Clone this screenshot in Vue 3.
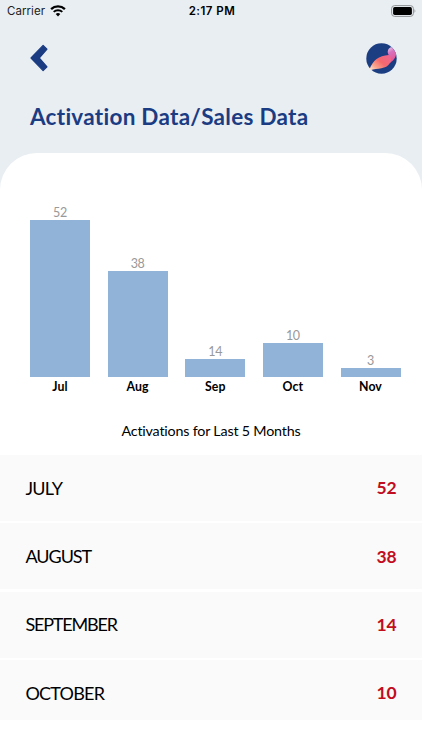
<template>
	<div class="screen">
		<div class="status-bar">
			<div class="carrier">
				<span>Carrier</span>
				<svg width="16" height="12" viewBox="0 0 16 12" aria-hidden="true">
					<path d="M1.1 4.2 A10 10 0 0 1 14.9 4.2" fill="none" stroke="#000" stroke-width="2.3" />
					<path d="M3.7 6.9 A6.2 6.2 0 0 1 12.3 6.9" fill="none" stroke="#000" stroke-width="2" />
					<path d="M5.7 9 A3.3 3.3 0 0 1 10.3 9 L8 11.4 Z" fill="#000" />
				</svg>
			</div>
			<span class="time">2:17 PM</span>
			<svg class="battery" width="26" height="12" viewBox="0 0 26 12" aria-hidden="true">
				<rect x="0.6" y="0.6" width="21.8" height="10.8" rx="3" fill="none" stroke="#8f9294" stroke-width="1" />
				<rect x="2.1" y="2.1" width="18.8" height="7.8" rx="1.6" fill="#000" />
				<path d="M23.6 4 Q25.2 6 23.6 8 Z" fill="#777a7c" />
			</svg>
		</div>

		<header class="header">
			<div class="nav">
				<button class="back" aria-label="Back">
					<svg width="18" height="28" viewBox="0 0 18 28">
						<path
							d="M1 14 L13.1 1.4 L17 5.2 L9.2 14 L17 22.8 L13.1 26.6 Z"
							fill="#1b3c82"
							stroke="#1b3c82"
							stroke-width="1.2"
							stroke-linejoin="round"
						/>
					</svg>
				</button>
				<svg class="logo" width="31" height="31" viewBox="0 0 31 31" aria-hidden="true">
					<defs>
						<linearGradient id="leaf" x1="0" y1="1" x2="1" y2="0.2">
							<stop offset="0" stop-color="#fff0df" />
							<stop offset="0.28" stop-color="#f9a58c" />
							<stop offset="0.6" stop-color="#f5686c" />
							<stop offset="1" stop-color="#ef668e" />
						</linearGradient>
						<linearGradient id="tip" x1="0" y1="0" x2="0.3" y2="1">
							<stop offset="0" stop-color="#ead4f2" />
							<stop offset="0.4" stop-color="#d771bd" />
							<stop offset="1" stop-color="#e75391" />
						</linearGradient>
					</defs>
					<circle cx="15.5" cy="15.5" r="15.2" fill="#1b3d82" />
					<path d="M25.2 4 C21.5 5.5 20.8 9.5 23 12.2 C23.6 14.5 24 17 24 20 C28 17 30.4 13.5 30 10.5 C29.2 8.5 27.6 5.8 25.2 4 Z" fill="url(#tip)" />
					<path d="M3.4 26.6 C7 17.5 12.5 12.6 22.8 12.1 C25.6 14.5 25.6 18 23.6 20.5 C20.5 26.2 11.5 25.2 4.2 27.2 Z" fill="url(#leaf)" />
				</svg>
			</div>
			<h1 class="title">Activation Data/Sales Data</h1>
		</header>

		<main class="card">
			<div class="chart">
				<div v-for="bar in bars" :key="bar.label" class="column">
					<span class="value">{{ bar.value }}</span>
					<div class="bar" :style="{ height: bar.height + 'px' }"></div>
					<span class="month">{{ bar.label }}</span>
				</div>
			</div>
			<p class="caption">Activations for Last 5 Months</p>
			<ul class="list">
				<li v-for="row in rows" :key="row.name" class="row">
					<span class="name" :style="{ letterSpacing: row.spacing + 'px' }">{{ row.name }}</span>
					<span class="count">{{ row.count }}</span>
				</li>
			</ul>
		</main>
	</div>
</template>

<script setup>
const bars = [
	{ label: "Jul", value: 52, height: 157.5 },
	{ label: "Aug", value: 38, height: 106.5 },
	{ label: "Sep", value: 14, height: 18.5 },
	{ label: "Oct", value: 10, height: 34.5 },
	{ label: "Nov", value: 3, height: 9 },
];

const rows = [
	{ name: "JULY", count: 52, spacing: -0.75 },
	{ name: "AUGUST", count: 38, spacing: -1.05 },
	{ name: "SEPTEMBER", count: 14, spacing: -1.2 },
	{ name: "OCTOBER", count: 10, spacing: -0.8 },
];
</script>

<style>
body {
	margin: 0;
	overflow: hidden;
}
</style>

<style scoped>
.screen {
	height: 750px;
	display: flex;
	flex-direction: column;
	box-sizing: border-box;
	background: #e9eef3;
	font-family: Lato, "Open Sans", sans-serif;
	font-variant-ligatures: none;
	color: #000;
}

.status-bar {
	height: 22px;
	padding: 0 5px 0 7px;
	display: grid;
	grid-template-columns: 1fr auto 1fr;
	align-items: center;
	font-family: Inter, sans-serif;
	font-size: 11.5px;
}

.carrier {
	display: flex;
	align-items: center;
	gap: 5px;
	letter-spacing: 0.05px;
	color: #222;
}

.time {
	font-weight: 600;
	letter-spacing: 0.5px;
}

.battery {
	justify-self: end;
}

.header {
	height: 131px;
	padding: 0 25px 0 30px;
}

.nav {
	height: 72px;
	display: flex;
	align-items: center;
	justify-content: space-between;
}

.back {
	display: flex;
	padding: 0;
	border: none;
	background: none;
}

.title {
	margin: 9px 0 0;
	font-size: 22.5px;
	line-height: 28px;
	font-weight: 700;
	letter-spacing: 0.28px;
	white-space: nowrap;
	color: #1b3c82;
}

.card {
	flex: 1;
	min-height: 0;
	background: #fff;
	border-radius: 37px 37px 0 0;
}

.chart {
	height: 242px;
	padding: 0 21.5px 0 30px;
	display: flex;
	align-items: flex-end;
	justify-content: space-between;
}

.column {
	width: 60px;
	display: flex;
	flex-direction: column;
	align-items: center;
}

.value {
	font-size: 12.5px;
	line-height: 15px;
	letter-spacing: -0.3px;
	color: #999;
}

.bar {
	width: 100%;
	background: #91b3d7;
}

.month {
	height: 18px;
	font-size: 12.3px;
	line-height: 20px;
	font-weight: 700;
	letter-spacing: 0.1px;
}

.caption {
	margin: 26px 0 0;
	height: 34px;
	font-size: 14.3px;
	line-height: 20px;
	letter-spacing: -0.2px;
	text-align: center;
}

.list {
	height: 265px;
	margin: 0;
	padding: 0;
	overflow: hidden;
	list-style: none;
}

.row {
	box-sizing: border-box;
	height: 66px;
	margin-bottom: 2.3px;
	padding: 0 25.5px 0.5px 25.5px;
	display: flex;
	align-items: center;
	justify-content: space-between;
	background: #fafafa;
}

.name {
	font-size: 18px;
}

.count {
	font-size: 17.5px;
	font-weight: 700;
	letter-spacing: -0.2px;
	color: #c10d20;
}
</style>
